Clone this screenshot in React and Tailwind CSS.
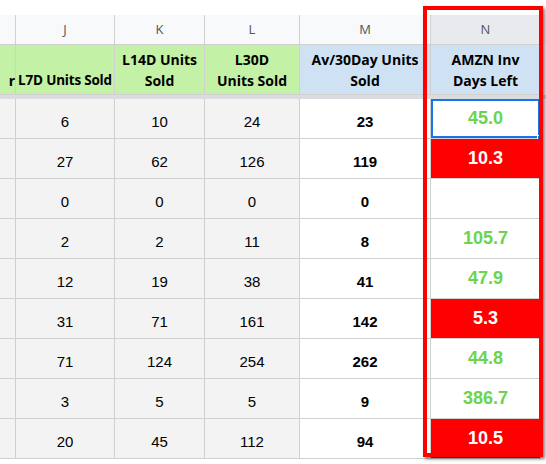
export default function App() {
  const rows = [
    [6, 10, 24, 23, "45.0", "g"],
    [27, 62, 126, 119, "10.3", "r"],
    [0, 0, 0, 0, "", "w"],
    [2, 2, 11, 8, "105.7", "g"],
    [12, 19, 38, 41, "47.9", "g"],
    [31, 71, 161, 142, "5.3", "r"],
    [71, 124, 254, 262, "44.8", "g"],
    [3, 5, 5, 9, "386.7", "g"],
    [20, 45, 112, 94, "10.5", "r"],
  ];
  const cols = "grid grid-cols-[16px_99px_90px_95px_131px_110px_5px]";
  const b = "border-r border-b border-[#d0d0d0]";
  return (
    <div className="relative w-[546px] h-[464px] overflow-hidden bg-white" style={{ fontFamily: "Arial, 'Liberation Sans', sans-serif" }}>
      <div className="h-[15px]" />
      <div className={`${cols} h-[30px] bg-[#f8f9fa] text-[13px] text-[#555]`} style={{ fontFamily: "'Open Sans', sans-serif" }}>
        <div className={b} />
        {["J", "K", "L", "M"].map((c) => (
          <div key={c} className={`${b} flex items-center justify-center`}>{c}</div>
        ))}
        <div className={`${b} flex items-center justify-center bg-[#e8eaed]`}>N</div>
        <div />
      </div>
      <div className={`${cols} h-[50px] text-[14px] font-bold text-black leading-[21px]`} style={{ fontFamily: "'Open Sans', sans-serif" }}>
        <div className={`${b} bg-[#c3f1a5] flex items-end justify-end pb-[3px]`}>r</div>
        <div className={`${b} bg-[#c3f1a5] flex items-end justify-center pb-[3px] whitespace-nowrap text-[13.5px] tracking-[-0.2px]`}>L7D Units Sold</div>
        <div className={`${b} bg-[#c3f1a5] flex items-end justify-center text-center pb-[3px]`}>L14D Units<br />Sold</div>
        <div className={`${b} bg-[#c3f1a5] flex items-end justify-center text-center pb-[3px]`}>L30D<br />Units Sold</div>
        <div className={`${b} bg-[#cfe2f3] flex items-end justify-center text-center pb-[3px] whitespace-nowrap overflow-hidden`}>Av/30Day Units<br />Sold</div>
        <div className={`${b} bg-[#cfe2f3] flex items-end justify-center text-center pb-[3px]`}>AMZN Inv<br />Days Left</div>
        <div />
      </div>
      <div className="h-[4px] bg-[#dadce0]" />
      {rows.map((r, i) => (
        <div key={i} className={`${cols} h-[40px] text-[15px]`}>
          <div className={`${b} bg-[#f3f3f3]`} />
          {r.slice(0, 3).map((v, j) => (
            <div key={j} className={`${b} bg-[#f3f3f3] flex items-end justify-center pb-[5px]`}>{v}</div>
          ))}
          <div className={`${b} bg-white flex items-end justify-center pb-[5px] font-bold`}>{r[3]}</div>
          <div className={`${b} relative flex items-center justify-center text-[18px] font-bold ${r[5] === "r" ? "bg-[#ff0000] text-white" : "bg-white text-[#6ad44e]"}`}>
            {r[4]}
            {i === 0 && (
              <>
                <div className="absolute inset-0 border-2 border-[#1a73e8]" />
                <div className="absolute right-[-3px] bottom-[-3px] w-[6px] h-[6px] bg-[#1a73e8] border border-white" />
              </>
            )}
          </div>
          <div />
        </div>
      ))}
      <div className="absolute left-[423px] top-[6px] w-[120px] h-[451px] border-4 border-[#ff0000] shadow-[2px_2px_3px_rgba(0,0,0,0.5)]" />
    </div>
  );
}
